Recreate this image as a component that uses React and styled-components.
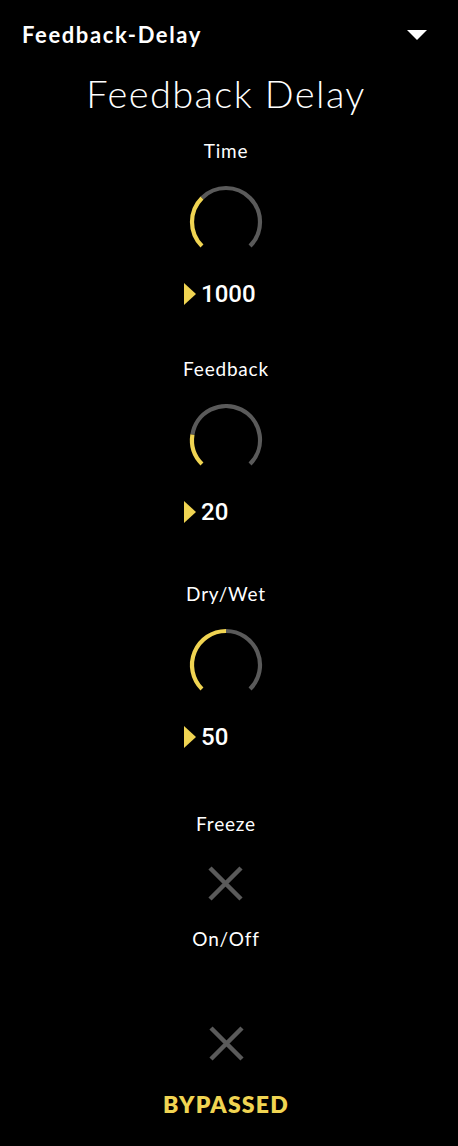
import React from "react";
import styled, { createGlobalStyle } from "styled-components";

const GlobalStyle = createGlobalStyle`
  html, body {
    margin: 0;
    padding: 0;
    background: #000;
  }
  body {
    font-family: "Lato", "Noto Sans", sans-serif;
    color: #fff;
  }
`;

const YELLOW = "#f0d452";
const GRAY = "#5a5a5a";

const knobs = [
  { label: "Time", value: 1000, fraction: 1000 / 3000, top: 25 },
  { label: "Feedback", value: 20, fraction: 0.2, top: 52 },
  { label: "Dry/Wet", value: 50, fraction: 0.5, top: 59 },
];

const polar = (cx, cy, r, deg) => {
  const a = (deg * Math.PI) / 180;
  return [cx + r * Math.cos(a), cy - r * Math.sin(a)];
};

const arcPath = (from, to) => {
  const [x1, y1] = polar(40, 40, 34, from);
  const [x2, y2] = polar(40, 40, 34, to);
  const large = from - to > 180 ? 1 : 0;
  return `M ${x1} ${y1} A 34 34 0 ${large} 1 ${x2} ${y2}`;
};

const Knob = ({ fraction }) => {
  const start = 225;
  const end = -45;
  const mid = start - 270 * fraction;
  return (
    <KnobSvg width="80" height="80" viewBox="0 0 80 80">
      <path d={arcPath(mid, end)} fill="none" stroke={GRAY} strokeWidth="4.2" />
      <path d={arcPath(start, mid)} fill="none" stroke={YELLOW} strokeWidth="4.2" />
    </KnobSvg>
  );
};

const Cross = () => (
  <CrossSvg width="35" height="35" viewBox="0 0 35 35">
    <path d="M2 2 L33 33 M33 2 L2 33" stroke={GRAY} strokeWidth="4.5" fill="none" />
  </CrossSvg>
);

const App = () => {
  return (
    <>
      <GlobalStyle />
      <Panel>
        <Header>
          <DeviceName>Feedback-Delay</DeviceName>
          <Caret />
        </Header>
        <Title>Feedback Delay</Title>
        {knobs.map((k) => (
          <Section key={k.label} $top={k.top}>
            <Label>{k.label}</Label>
            <Knob fraction={k.fraction} />
            <ValueRow>
              <Marker />
              <Value>{k.value}</Value>
            </ValueRow>
          </Section>
        ))}
        <Section $top={64}>
          <Label>Freeze</Label>
          <Toggle $top={31}>
            <Cross />
          </Toggle>
        </Section>
        <Section $top={27}>
          <Label>On/Off</Label>
          <Toggle $top={76}>
            <Cross />
          </Toggle>
          <Bypassed>BYPASSED</Bypassed>
        </Section>
      </Panel>
    </>
  );
};

const Panel = styled.div`
  width: 452px;
  min-height: 1146px;
  background: #000;
  display: flex;
  flex-direction: column;
  align-items: center;
`;

const Header = styled.div`
  align-self: stretch;
  display: flex;
  align-items: center;
  justify-content: space-between;
  padding: 22px 25px 0 22px;
  height: 26px;
`;

const DeviceName = styled.div`
  font-size: 22px;
  line-height: 26px;
  font-weight: 700;
  letter-spacing: 1.6px;
  color: #fff;
`;

const Caret = styled.div`
  width: 0;
  height: 0;
  border-left: 10px solid transparent;
  border-right: 10px solid transparent;
  border-top: 10px solid #fff;
`;

const Title = styled.div`
  margin-top: 23px;
  font-size: 38px;
  line-height: 44px;
  font-weight: 300;
  letter-spacing: 1.4px;
  color: #fff;
`;

const Section = styled.div`
  margin-top: ${(p) => p.$top}px;
  display: flex;
  flex-direction: column;
  align-items: center;
`;

const Label = styled.div`
  font-size: 19px;
  line-height: 22px;
  letter-spacing: 0.8px;
  color: #fff;
`;

const KnobSvg = styled.svg`
  display: block;
  margin-top: 20px;
`;

const ValueRow = styled.div`
  margin-top: 20px;
  width: 84px;
  height: 24px;
  display: flex;
  align-items: center;
  gap: 5px;
`;

const Marker = styled.div`
  width: 0;
  height: 0;
  border-top: 11px solid transparent;
  border-bottom: 11px solid transparent;
  border-left: 12px solid ${YELLOW};
`;

const Value = styled.div`
  font-family: "Roboto", "Liberation Sans", sans-serif;
  font-weight: 500;
  font-size: 24px;
  line-height: 24px;
  color: #fff;
`;

const Toggle = styled.div`
  margin-top: ${(p) => p.$top}px;
  width: 35px;
  height: 35px;
`;

const CrossSvg = styled.svg`
  display: block;
`;

const Bypassed = styled.div`
  margin-top: 30px;
  font-size: 23px;
  line-height: 26px;
  font-weight: 800;
  letter-spacing: 1.2px;
  color: ${YELLOW};
`;

export default App;
